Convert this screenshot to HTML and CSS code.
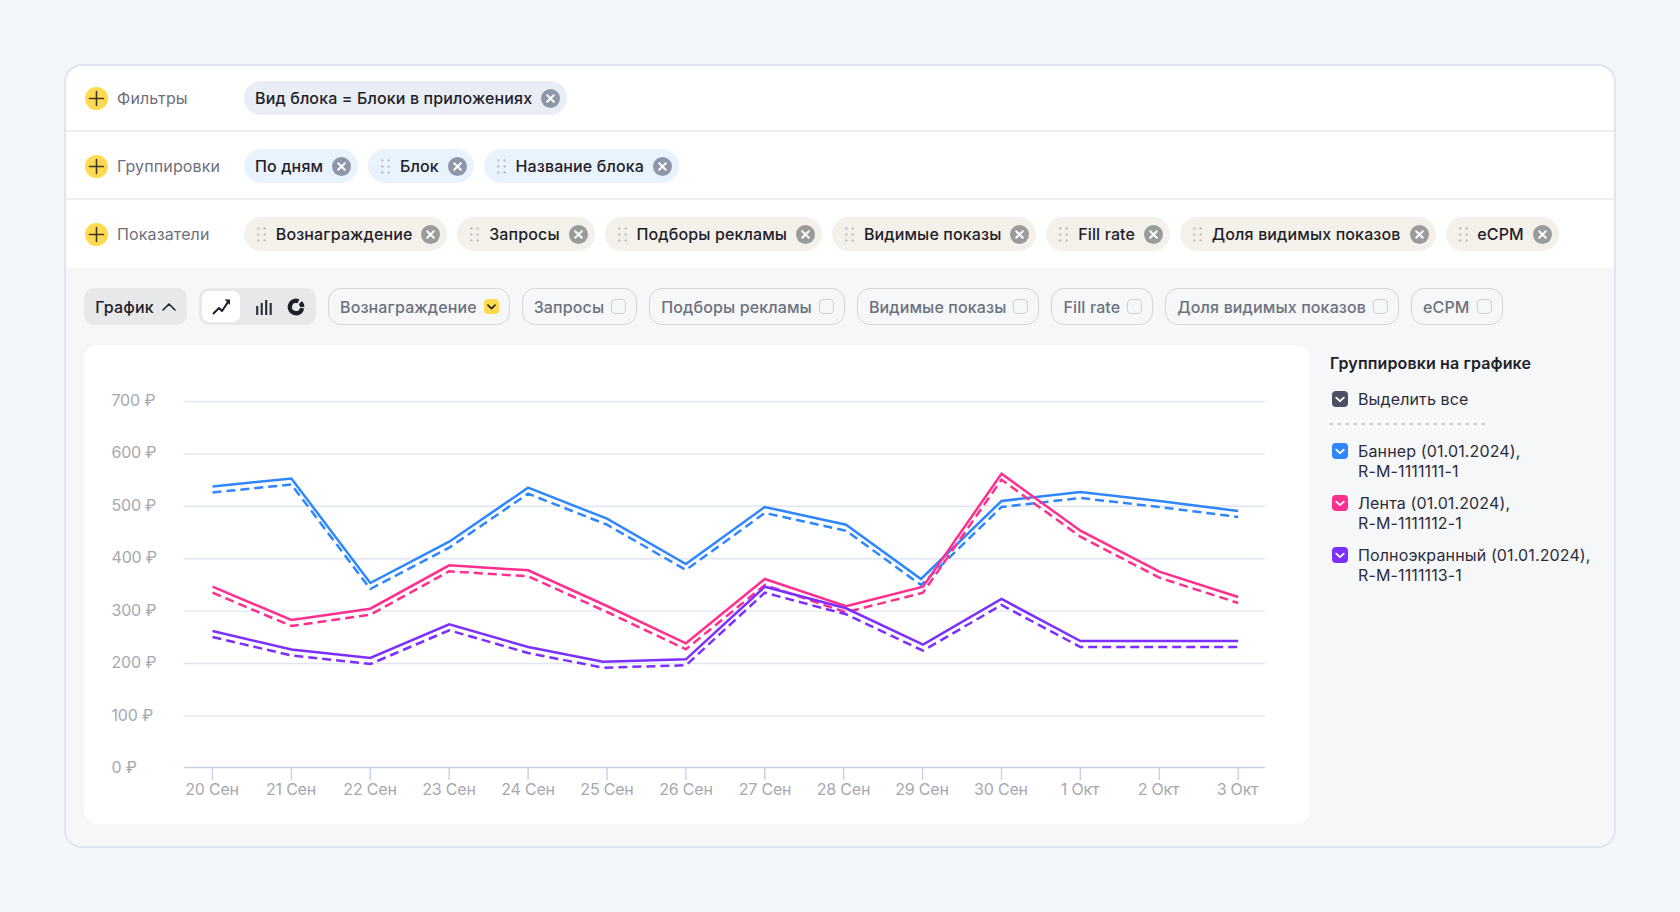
FILE: index.html
```html
<!DOCTYPE html>
<html lang="ru">
<head>
<meta charset="utf-8">
<title>Отчёт</title>
<link rel="stylesheet" href="styles.css">
</head>
<body>
<svg class="defs" width="0" height="0" aria-hidden="true">
  <defs>
    <symbol id="x" viewBox="0 0 19 19"><circle cx="9.5" cy="9.5" r="9.5" fill="currentColor"/><path d="M6.2 6.2l6.6 6.6M12.8 6.2l-6.6 6.6" stroke="#fff" stroke-width="2" stroke-linecap="round"/></symbol>
    <symbol id="drag" viewBox="0 0 9 15"><g fill="#c2c3c6"><circle cx="1.3" cy="1.5" r="1.3"/><circle cx="7.7" cy="1.5" r="1.3"/><circle cx="1.3" cy="7.5" r="1.3"/><circle cx="7.7" cy="7.5" r="1.3"/><circle cx="1.3" cy="13.5" r="1.3"/><circle cx="7.7" cy="13.5" r="1.3"/></g></symbol>
    <symbol id="plus" viewBox="0 0 23 23"><circle cx="11.5" cy="11.5" r="11.5" fill="#ffd950"/><path d="M11.5 4.5v14M4.5 11.5h14" stroke="#3c3a2c" stroke-width="1.6" stroke-linecap="round"/></symbol>
    <symbol id="check" viewBox="0 0 16 16"><path d="M4.2 6.6L8 10.2l3.8-3.6" fill="none" stroke="currentColor" stroke-width="1.8" stroke-linecap="round" stroke-linejoin="round"/></symbol>
  </defs>
</svg>
<main class="card">
  <section class="row">
    <div class="row-head"><svg class="plus"><use href="#plus"/></svg><span class="row-label">Фильтры</span></div>
    <div class="chips">
      <span class="chip chip-gray">Вид блока = Блоки в приложениях<svg class="x"><use href="#x"/></svg></span>
    </div>
  </section>
  <section class="row row-mid">
    <div class="row-head"><svg class="plus"><use href="#plus"/></svg><span class="row-label">Группировки</span></div>
    <div class="chips">
      <span class="chip chip-blue">По дням<svg class="x"><use href="#x"/></svg></span>
      <span class="chip chip-blue chip-drag"><svg class="drag"><use href="#drag"/></svg>Блок<svg class="x"><use href="#x"/></svg></span>
      <span class="chip chip-blue chip-drag"><svg class="drag"><use href="#drag"/></svg>Название блока<svg class="x"><use href="#x"/></svg></span>
    </div>
  </section>
  <section class="row row-last">
    <div class="row-head"><svg class="plus"><use href="#plus"/></svg><span class="row-label">Показатели</span></div>
    <div class="chips">
      <span class="chip chip-beige chip-drag"><svg class="drag"><use href="#drag"/></svg>Вознаграждение<svg class="x"><use href="#x"/></svg></span>
      <span class="chip chip-beige chip-drag"><svg class="drag"><use href="#drag"/></svg>Запросы<svg class="x"><use href="#x"/></svg></span>
      <span class="chip chip-beige chip-drag"><svg class="drag"><use href="#drag"/></svg>Подборы рекламы<svg class="x"><use href="#x"/></svg></span>
      <span class="chip chip-beige chip-drag"><svg class="drag"><use href="#drag"/></svg>Видимые показы<svg class="x"><use href="#x"/></svg></span>
      <span class="chip chip-beige chip-drag"><svg class="drag"><use href="#drag"/></svg>Fill rate<svg class="x"><use href="#x"/></svg></span>
      <span class="chip chip-beige chip-drag"><svg class="drag"><use href="#drag"/></svg>Доля видимых показов<svg class="x"><use href="#x"/></svg></span>
      <span class="chip chip-beige chip-drag"><svg class="drag"><use href="#drag"/></svg>eCPM<svg class="x"><use href="#x"/></svg></span>
    </div>
  </section>
  <section class="panel">
    <div class="toolbar">
      <button class="btn-view">График
        <svg class="chev" viewBox="0 0 14 8"><path d="M1 7l6-6 6 6" fill="none" stroke="#24262f" stroke-width="1.6" stroke-linecap="round" stroke-linejoin="round"/></svg>
      </button>
      <div class="seg">
        <span class="seg-item seg-active">
          <svg class="seg-icon" viewBox="0 0 20 18"><path d="M2 16l6-6 3 3 6-9" fill="none" stroke="#1f2129" stroke-width="2.1" stroke-linejoin="round"/><path d="M13.5 1.5h5.5v5.5z" fill="#1f2129"/></svg>
        </span>
        <span class="seg-item">
          <svg class="seg-icon" viewBox="0 0 20 18"><path d="M3.2 8v9M7.7 5v12M12.2 2v15M16.7 5v12" stroke="#2a2c35" stroke-width="2.1"/></svg>
        </span>
        <span class="seg-item seg-narrow">
          <svg class="seg-icon" viewBox="0 0 20 18"><circle cx="10" cy="9" r="6.2" fill="none" stroke="#1f2129" stroke-width="4.4" stroke-dasharray="30 2.2 4.6 2.2" transform="rotate(10 10 9)"/></svg>
        </span>
      </div>
      <label class="metric">Вознаграждение<span class="box box-on"><svg class="tick"><use href="#check"/></svg></span></label>
      <label class="metric">Запросы<span class="box"></span></label>
      <label class="metric">Подборы рекламы<span class="box"></span></label>
      <label class="metric">Видимые показы<span class="box"></span></label>
      <label class="metric">Fill rate<span class="box"></span></label>
      <label class="metric">Доля видимых показов<span class="box"></span></label>
      <label class="metric">eCPM<span class="box"></span></label>
    </div>
    <div class="content">
      <div class="chart">
        <svg class="plot" viewBox="84 345 1226 479" width="1226" height="479">
          <g class="grid">
            <path d="M184 401.5H1265M184 453.9H1265M184 506.3H1265M184 558.7H1265M184 611.1H1265M184 663.5H1265M184 715.9H1265"/>
          </g>
          <g class="axis">
            <path d="M184 767.5H1265"/>
            <path d="M212.5 768v12M291.4 768v12M370.3 768v12M449.2 768v12M528.1 768v12M607 768v12M685.9 768v12M764.8 768v12M843.7 768v12M922.6 768v12M1001.5 768v12M1080.4 768v12M1159.3 768v12M1238.2 768v12"/>
          </g>
          <g class="ylabels">
            <text x="111.5" y="405.5">700 ₽</text>
            <text x="111.5" y="457.5">600 ₽</text>
            <text x="111.5" y="510.5">500 ₽</text>
            <text x="111.5" y="562.5">400 ₽</text>
            <text x="111.5" y="615.5">300 ₽</text>
            <text x="111.5" y="667.5">200 ₽</text>
            <text x="111.5" y="720.5">100 ₽</text>
            <text x="111.5" y="772.5">0 ₽</text>
          </g>
          <g class="xlabels">
            <text x="212" y="795">20 Сен</text>
            <text x="291" y="795">21 Сен</text>
            <text x="370" y="795">22 Сен</text>
            <text x="449" y="795">23 Сен</text>
            <text x="528" y="795">24 Сен</text>
            <text x="607" y="795">25 Сен</text>
            <text x="686" y="795">26 Сен</text>
            <text x="765" y="795">27 Сен</text>
            <text x="843.5" y="795">28 Сен</text>
            <text x="922" y="795">29 Сен</text>
            <text x="1001" y="795">30 Сен</text>
            <text x="1080" y="795">1 Окт</text>
            <text x="1158.5" y="795">2 Окт</text>
            <text x="1237.5" y="795">3 Окт</text>
          </g>
          <g class="lines">
            <polyline class="blue" points="212.5,486.5 291.4,478.5 370.3,583 449.2,541.7 528.1,487.7 607,518.7 685.9,564 764.8,507 846,524.7 921,579 1001.5,501 1080.4,492 1159.3,501 1238.2,511"/>
            <polyline class="blue dash" points="212.5,492.5 291.4,484.5 370.3,589 449.2,547.7 528.1,493.7 607,524.7 685.9,570 764.8,513 846,530.7 921,585 1001.5,507 1080.4,498 1159.3,507 1238.2,517"/>
            <polyline class="pink" points="212.5,586.7 291.4,620 370.3,608.7 449.2,565.3 528.1,570.3 607,606 685.9,643.3 764.8,579 846,606.3 923,586.7 1001.5,473.7 1080.4,530.7 1159.3,571.7 1238.2,597"/>
            <polyline class="pink dash" points="212.5,592.7 291.4,626 370.3,614.7 449.2,571.3 528.1,576.3 607,612 685.9,649.3 764.8,585 846,612.3 923,592.7 1001.5,479.7 1080.4,536.7 1159.3,577.7 1238.2,603"/>
            <polyline class="violet" points="212.5,631 291.4,649.5 370.3,658 449.2,624.3 528.1,647 603,661.7 685.9,659.3 764.8,586.7 846,608.3 923,644.7 1001.5,599 1080.4,641 1159.3,641 1238.2,641"/>
            <polyline class="violet dash" points="212.5,637 291.4,655.5 370.3,664 449.2,630.3 528.1,653 603,667.7 685.9,665.3 764.8,592.7 846,614.3 923,650.7 1001.5,605 1080.4,647 1159.3,647 1238.2,647"/>
          </g>
        </svg>
      </div>
      <aside class="side">
        <h2 class="side-title">Группировки на графике</h2>
        <div class="opt opt-all"><span class="cb cb-dark"><svg class="tick"><use href="#check"/></svg></span>Выделить все</div>
        <div class="side-sep"></div>
        <div class="opt"><span class="cb cb-blue"><svg class="tick"><use href="#check"/></svg></span><span>Баннер (01.01.2024),<br>R-M-1111111-1</span></div>
        <div class="opt"><span class="cb cb-pink"><svg class="tick"><use href="#check"/></svg></span><span>Лента (01.01.2024),<br>R-M-1111112-1</span></div>
        <div class="opt"><span class="cb cb-violet"><svg class="tick"><use href="#check"/></svg></span><span>Полноэкранный (01.01.2024),<br>R-M-1111113-1</span></div>
      </aside>
    </div>
  </section>
</main>
</body>
</html>
```
FILE: styles.css
```css
* { box-sizing: border-box; }
html, body { margin: 0; height: 100%; }
body {
  background: #f4f7fa;
  padding: 64px;
  font-family: Inter, "Noto Sans", sans-serif;
  font-size: 16px;
  letter-spacing: 0.13px;
  color: #1f2129;
}
.defs { position: absolute; }
.card {
  width: 1552px;
  height: 784px;
  background: #fff;
  border: 2px solid #dfe4f0;
  border-radius: 18px;
  overflow: hidden;
  display: flex;
  flex-direction: column;
}
.row {
  height: 66px;
  flex: none;
  display: flex;
  align-items: center;
  padding-left: 19px;
  border-bottom: 2px solid #eceef2;
}
.row-mid { height: 68px; padding-top: 2px; }
.row-last { height: 68px; border-bottom: 0; }
.row-head { width: 159px; flex: none; display: flex; align-items: center; gap: 9px; }
.plus { width: 23px; height: 23px; flex: none; }
.row-label { color: #6e7079; font-weight: 400; }
.chips { display: flex; gap: 10px; }
.chip {
  height: 34px;
  border-radius: 17px;
  display: inline-flex;
  align-items: center;
  padding: 0 7px 0 11px;
  font-weight: 500;
  white-space: nowrap;
}
.chip-drag { padding-left: 13px; }
.chip-gray { background: #e9edf5; color: #1f2129; }
.chip-blue { background: #e9f3fe; }
.chip-beige { background: #f4f1ea; }
.drag { width: 9px; height: 15px; margin-right: 9.75px; flex: none; }
.x { width: 19px; height: 19px; margin-left: 9px; flex: none; color: #8e97a8; }
.chip-beige .x { color: #9b9b9b; }
.panel {
  flex: 1;
  background: #f6f7f9;
  padding: 20px 18px 22px;
  display: flex;
  flex-direction: column;
  gap: 20px;
}
.toolbar { display: flex; height: 37px; gap: 12px; }
.btn-view {
  width: 103px;
  background: #e6e8ea;
  border: 0;
  border-radius: 10px;
  font: inherit;
  font-weight: 500;
  letter-spacing: inherit;
  color: #1f2129;
  display: flex;
  align-items: center;
  justify-content: center;
  gap: 8px;
  padding: 0;
}
.chev { width: 14px; height: 8px; }
.seg {
  width: 117px;
  background: #e6e8ea;
  border-radius: 10px;
  padding: 3px;
  display: flex;
}
.seg-item { width: 38px; display: flex; align-items: center; justify-content: center; border-radius: 7px; }
.seg-item + .seg-item { width: 45px; padding-left: 3px; }
.seg-item.seg-narrow { width: 28px; padding: 0 6px 0 0; }
.seg-active { background: #fff; }
.seg-icon { width: 20px; height: 18px; flex: none; }
.metric {
  display: flex;
  align-items: center;
  gap: 7px;
  padding: 0 10px 0 11px;
  border: 1.5px solid #d3d5da;
  border-radius: 13px;
  color: #6c717e;
  font-weight: 500;
  white-space: nowrap;
}
.box { width: 15px; height: 15px; border: 1.5px solid #cdd0d5; border-radius: 4px; flex: none; }
.box-on { background: #ffd950; border: 0; color: #2b2a20; display: block; }
.tick { width: 100%; height: 100%; display: block; }
.content { flex: 1; display: flex; gap: 20px; min-height: 0; }
.chart { width: 1226px; flex: none; background: #fff; border-radius: 14px; overflow: hidden; }
.plot { display: block; }
.grid path { fill: none; stroke: #e2e6f3; stroke-width: 1.4; }
.axis path { fill: none; stroke: #c8d0e6; stroke-width: 1.4; }
.ylabels text, .xlabels text { font-size: 16px; fill: #a6a8b0; letter-spacing: -0.2px; }
.xlabels text { text-anchor: middle; }
.lines polyline { fill: none; stroke-width: 2.5; stroke-linejoin: miter; }
.lines .dash { stroke-dasharray: 9 5; }
.blue { stroke: #2f87ff; }
.pink { stroke: #ff2f8e; }
.violet { stroke: #7d2fff; }
.side { padding-top: 8px; flex: 1; min-width: 0; }
.side-title { margin: 0 0 16px; font-size: 16px; font-weight: 600; line-height: 20px; color: #1f2129; }
.opt {
  display: flex;
  gap: 10px;
  line-height: 20px;
  padding-left: 2px;
  color: #2b2d38;
  margin-bottom: 12px;
  white-space: nowrap;
}
.opt-all { margin-bottom: 14px; }
.cb { width: 16px; height: 16px; border-radius: 4px; margin-top: 2px; flex: none; color: #fff; }
.cb-dark { background: #4d5163; }
.cb-blue { background: #2f87ff; }
.cb-pink { background: #ff2f8e; }
.cb-violet { background: #7d2fff; }
.side-sep {
  width: 160px;
  height: 2px;
  margin-bottom: 16px;
  background: linear-gradient(90deg, #c4c8cf 3px, transparent 3px) 0 0 / 8px 2px repeat-x;
}
```
